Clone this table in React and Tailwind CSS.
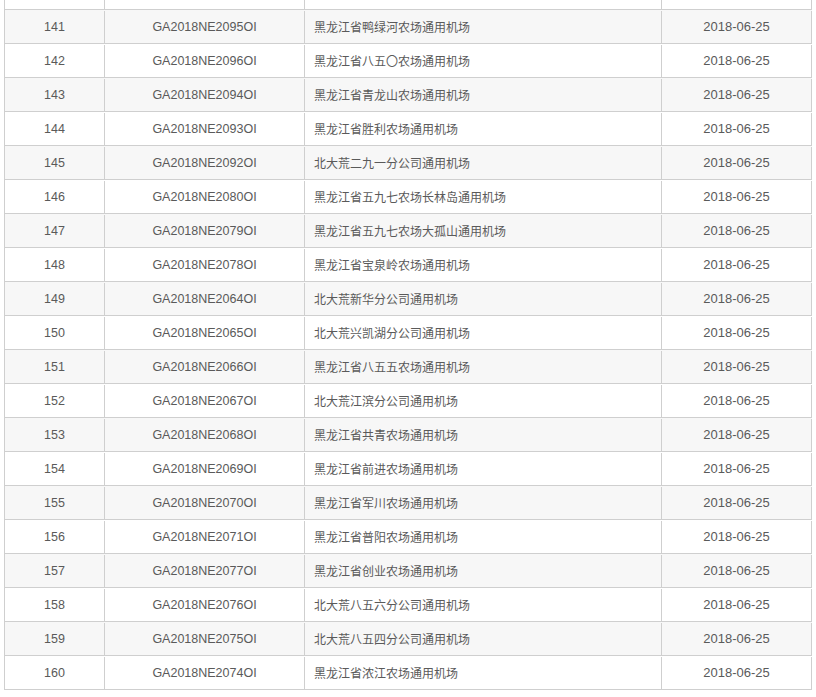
import React from "react";

const rows = [
  ["141", "GA2018NE2095OI", "黑龙江省鸭绿河农场通用机场"],
  ["142", "GA2018NE2096OI", "黑龙江省八五〇农场通用机场"],
  ["143", "GA2018NE2094OI", "黑龙江省青龙山农场通用机场"],
  ["144", "GA2018NE2093OI", "黑龙江省胜利农场通用机场"],
  ["145", "GA2018NE2092OI", "北大荒二九一分公司通用机场"],
  ["146", "GA2018NE2080OI", "黑龙江省五九七农场长林岛通用机场"],
  ["147", "GA2018NE2079OI", "黑龙江省五九七农场大孤山通用机场"],
  ["148", "GA2018NE2078OI", "黑龙江省宝泉岭农场通用机场"],
  ["149", "GA2018NE2064OI", "北大荒新华分公司通用机场"],
  ["150", "GA2018NE2065OI", "北大荒兴凯湖分公司通用机场"],
  ["151", "GA2018NE2066OI", "黑龙江省八五五农场通用机场"],
  ["152", "GA2018NE2067OI", "北大荒江滨分公司通用机场"],
  ["153", "GA2018NE2068OI", "黑龙江省共青农场通用机场"],
  ["154", "GA2018NE2069OI", "黑龙江省前进农场通用机场"],
  ["155", "GA2018NE2070OI", "黑龙江省军川农场通用机场"],
  ["156", "GA2018NE2071OI", "黑龙江省普阳农场通用机场"],
  ["157", "GA2018NE2077OI", "黑龙江省创业农场通用机场"],
  ["158", "GA2018NE2076OI", "北大荒八五六分公司通用机场"],
  ["159", "GA2018NE2075OI", "北大荒八五四分公司通用机场"],
  ["160", "GA2018NE2074OI", "黑龙江省浓江农场通用机场"],
];

export default function App() {
  return (
    <div
      className="w-[816px] h-[697px] bg-white pl-[4px] overflow-hidden text-[#5a5a5a] text-[12.5px]"
      style={{ fontFamily: '"Liberation Sans", Arial, "Noto Sans CJK SC", sans-serif' }}
    >
      <div className="w-[808px] border-l border-[#cfcfcf]">
        <div className="flex h-[10px] border-b border-[#cfcfcf] bg-white">
          <div className="w-[100px] border-r border-[#cfcfcf]" />
          <div className="w-[200px] border-r border-[#cfcfcf]" />
          <div className="w-[357px] border-r border-[#cfcfcf]" />
          <div className="w-[150px] border-r border-[#cfcfcf]" />
        </div>
        {rows.map((r, i) => (
          <div
            key={r[0]}
            className={`flex h-[34px] pt-[1px] border-b border-[#cfcfcf] ${i % 2 === 0 ? "bg-[#f7f7f7]" : "bg-white"}`}
          >
            <div className="w-[100px] border-r border-[#cfcfcf] flex items-center justify-center">{r[0]}</div>
            <div className="w-[200px] border-r border-[#cfcfcf] flex items-center justify-center">{r[1]}</div>
            <div
              className="w-[357px] border-r border-[#cfcfcf] flex items-center pl-[9px] text-[12px]"
              style={{ fontFamily: '"Noto Sans CJK SC", sans-serif' }}
            >
              {r[2]}
            </div>
            <div className="w-[150px] border-r border-[#cfcfcf] flex items-center justify-center text-[13px]">2018-06-25</div>
          </div>
        ))}
      </div>
    </div>
  );
}
